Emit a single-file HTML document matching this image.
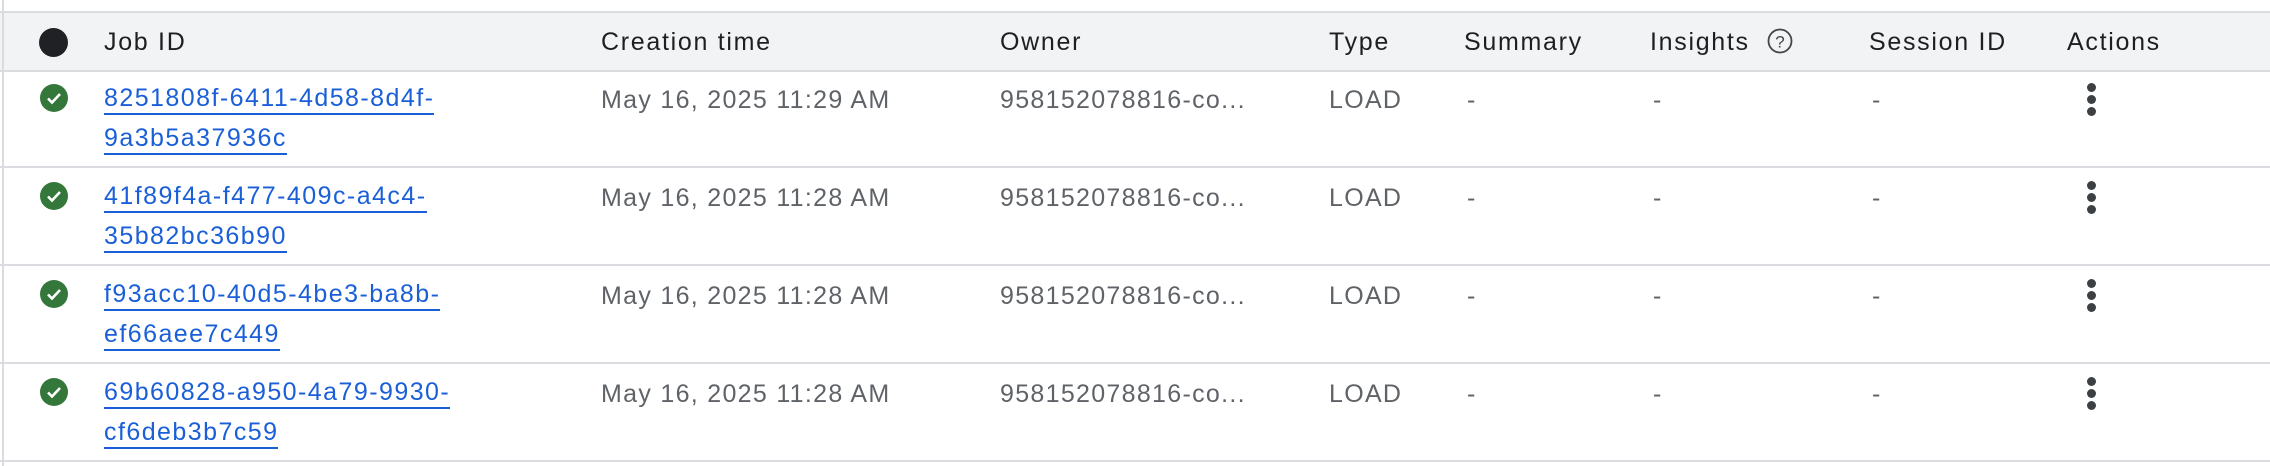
<!DOCTYPE html>
<html><head><meta charset="utf-8"><style>
html,body{margin:0;padding:0;background:#fff;width:2270px;height:466px;overflow:hidden;font-family:"Liberation Sans",Arial,sans-serif;}
.hdr{position:absolute;left:0;top:11px;width:2270px;height:57px;background:#f1f3f4;border-top:2px solid #dadce0;border-bottom:2px solid #dadce0;}
.lb{position:absolute;left:2px;top:0;width:2px;height:466px;background:#dadce0;}
.t{position:absolute;font-size:25px;color:#1f1f1f;white-space:nowrap;line-height:30px;letter-spacing:1.3px;}
.h{letter-spacing:1.7px;}
.g{color:#5f6368;}
.row{position:absolute;left:0;width:2270px;border-bottom:2px solid #dadce0;}
a{position:absolute;color:#1a5fd8;font-size:25px;letter-spacing:1.45px;line-height:40px;text-decoration:none;white-space:nowrap;}
a span{border-bottom:2px solid #1a5fd8;padding-bottom:1px;}
.chk{position:absolute;left:40px;width:28px;height:28px;border-radius:50%;background:#34773a;}
.chk svg{position:absolute;left:0;top:0}
.dots{position:absolute;left:2087px;width:9px;}
.dots i{display:block;width:9px;height:9px;border-radius:50%;background:#3c4043;margin-bottom:3px;}
</style></head><body>
<div class="hdr"></div>
<div class="lb"></div>
<div style="position:absolute;left:39px;top:28px;width:29px;height:29px;border-radius:50%;background:#202124"></div>
<div class="t h" style="left:104px;top:27px">Job ID</div>
<div class="t h" style="left:601px;top:27px">Creation time</div>
<div class="t h" style="left:1000px;top:27px">Owner</div>
<div class="t h" style="left:1329px;top:27px">Type</div>
<div class="t h" style="left:1464px;top:27px">Summary</div>
<div class="t h" style="left:1650px;top:27px">Insights</div>
<svg style="position:absolute;left:1766px;top:27px" width="28" height="28" viewBox="0 0 28 28"><circle cx="14" cy="14" r="11.5" fill="none" stroke="#444746" stroke-width="1.8"/><text x="14" y="20.5" text-anchor="middle" font-family="Liberation Sans" font-size="17" fill="#444746">?</text></svg>
<div class="t h" style="left:1869px;top:27px">Session ID</div>
<div class="t h" style="left:2067px;top:27px">Actions</div>

<div class="row" style="top:70px;height:96px"></div>
<div class="row" style="top:168px;height:96px"></div>
<div class="row" style="top:266px;height:96px"></div>
<div class="row" style="top:364px;height:96px"></div>

<div class="chk" style="top:84px"><svg width="28" height="28"><path d="M8 14.5l4 4 8-8.5" fill="none" stroke="#fff" stroke-width="2.6"/></svg></div>
<a style="left:104px;top:78px"><span>8251808f-6411-4d58-8d4f-</span><br><span>9a3b5a37936c</span></a>
<div class="t g" style="left:601px;top:85px">May 16, 2025 11:29 AM</div>
<div class="t g" style="left:1000px;top:85px">958152078816-co...</div>
<div class="t g" style="left:1329px;top:85px">LOAD</div>
<div class="t g" style="left:1467px;top:85px">-</div>
<div class="t g" style="left:1653px;top:85px">-</div>
<div class="t g" style="left:1872px;top:85px">-</div>
<div class="dots" style="top:83px"><i></i><i></i><i></i></div>

<div class="chk" style="top:182px"><svg width="28" height="28"><path d="M8 14.5l4 4 8-8.5" fill="none" stroke="#fff" stroke-width="2.6"/></svg></div>
<a style="left:104px;top:176px"><span>41f89f4a-f477-409c-a4c4-</span><br><span>35b82bc36b90</span></a>
<div class="t g" style="left:601px;top:183px">May 16, 2025 11:28 AM</div>
<div class="t g" style="left:1000px;top:183px">958152078816-co...</div>
<div class="t g" style="left:1329px;top:183px">LOAD</div>
<div class="t g" style="left:1467px;top:183px">-</div>
<div class="t g" style="left:1653px;top:183px">-</div>
<div class="t g" style="left:1872px;top:183px">-</div>
<div class="dots" style="top:181px"><i></i><i></i><i></i></div>

<div class="chk" style="top:280px"><svg width="28" height="28"><path d="M8 14.5l4 4 8-8.5" fill="none" stroke="#fff" stroke-width="2.6"/></svg></div>
<a style="left:104px;top:274px"><span>f93acc10-40d5-4be3-ba8b-</span><br><span>ef66aee7c449</span></a>
<div class="t g" style="left:601px;top:281px">May 16, 2025 11:28 AM</div>
<div class="t g" style="left:1000px;top:281px">958152078816-co...</div>
<div class="t g" style="left:1329px;top:281px">LOAD</div>
<div class="t g" style="left:1467px;top:281px">-</div>
<div class="t g" style="left:1653px;top:281px">-</div>
<div class="t g" style="left:1872px;top:281px">-</div>
<div class="dots" style="top:279px"><i></i><i></i><i></i></div>

<div class="chk" style="top:378px"><svg width="28" height="28"><path d="M8 14.5l4 4 8-8.5" fill="none" stroke="#fff" stroke-width="2.6"/></svg></div>
<a style="left:104px;top:372px"><span>69b60828-a950-4a79-9930-</span><br><span>cf6deb3b7c59</span></a>
<div class="t g" style="left:601px;top:379px">May 16, 2025 11:28 AM</div>
<div class="t g" style="left:1000px;top:379px">958152078816-co...</div>
<div class="t g" style="left:1329px;top:379px">LOAD</div>
<div class="t g" style="left:1467px;top:379px">-</div>
<div class="t g" style="left:1653px;top:379px">-</div>
<div class="t g" style="left:1872px;top:379px">-</div>
<div class="dots" style="top:377px"><i></i><i></i><i></i></div>
</body></html>
